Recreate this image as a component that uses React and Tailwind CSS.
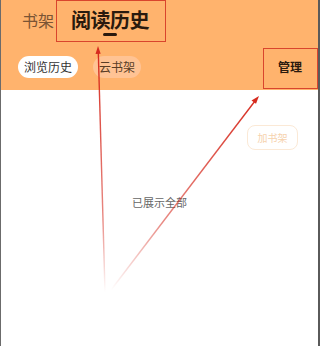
import React from "react";

export default function App() {
  const font = { fontFamily: '"Noto Sans CJK SC", "Noto Sans", sans-serif' };
  return (
    <div className="relative w-[320px] h-[346px] bg-white overflow-hidden border-l border-l-[#6b6b6b] border-r-2 border-r-[#5a5a5a]" style={font}>
      {/* header */}
      <div className="h-[90px] bg-[#ffb36d] flex flex-col">
        <div className="flex items-end h-[41px] pl-[21px]">
          <span className="text-[16px] leading-none text-[#7a5434] mb-[13px]">书架</span>
          <div className="ml-[2px] w-[108px] h-[41px] flex flex-col items-center">
            <span className="mt-[8px] text-[20px] leading-[24px] font-bold text-[#2a1a0e] tracking-[-0.5px]">阅读历史</span>
            <span className="mt-[1px] w-[14px] h-[3px] rounded-sm bg-[#2a1a0e]" />
          </div>
        </div>
        <div className="flex items-center mt-[15px] pl-[17px] pr-[4px]">
          <span className="h-[22px] px-[6px] rounded-full bg-white text-[12px] leading-[22px] text-[#333]">浏览历史</span>
          <span className="ml-[15px] h-[22px] px-[6px] rounded-full bg-[#ffc394] text-[12px] leading-[22px] text-[#5a3d26]">云书架</span>
          <span className="ml-auto mr-[12px] text-[12px] font-bold text-[#2a1a0e]">管理</span>
        </div>
      </div>

      {/* body */}
      <div className="flex flex-col items-center">
        <div className="self-end mr-[20px] mt-[35px] h-[25px] w-[51px] rounded-[8px] border border-[#fbe9d6] flex items-center justify-center text-[10px] text-[#f6d2ad]">
          加书架
        </div>
        <div className="mt-[44px] text-[11px] text-[#666]">已展示全部</div>
      </div>

      {/* annotation boxes */}
      <div className="absolute left-[55px] top-0 w-[110px] h-[42px] border border-[#d9452d]" />
      <div className="absolute left-[262px] top-[48px] w-[55px] h-[41px] border border-[#d9452d]" />

      {/* arrows */}
      <svg className="absolute inset-0" width="320" height="346" viewBox="0 0 320 346">
        <defs>
          <linearGradient id="g1" x1="104" y1="292" x2="97" y2="50" gradientUnits="userSpaceOnUse">
            <stop offset="0" stopColor="#d62a1e" stopOpacity="0" />
            <stop offset="0.3" stopColor="#d62a1e" stopOpacity="0.55" />
            <stop offset="1" stopColor="#d62a1e" stopOpacity="1" />
          </linearGradient>
          <linearGradient id="g2" x1="110" y1="290" x2="257" y2="97" gradientUnits="userSpaceOnUse">
            <stop offset="0" stopColor="#d62a1e" stopOpacity="0" />
            <stop offset="0.35" stopColor="#d62a1e" stopOpacity="0.55" />
            <stop offset="1" stopColor="#d62a1e" stopOpacity="1" />
          </linearGradient>
        </defs>
        <line x1="104" y1="292" x2="97.3" y2="52" stroke="url(#g1)" strokeWidth="1.4" />
        <polygon points="97,46 94.5,54 99.7,53.8" fill="#d62a1e" />
        <line x1="110" y1="290" x2="254" y2="101" stroke="url(#g2)" strokeWidth="1.4" />
        <polygon points="258,96 250.5,100.5 255,103.8" fill="#d62a1e" />
      </svg>
    </div>
  );
}
